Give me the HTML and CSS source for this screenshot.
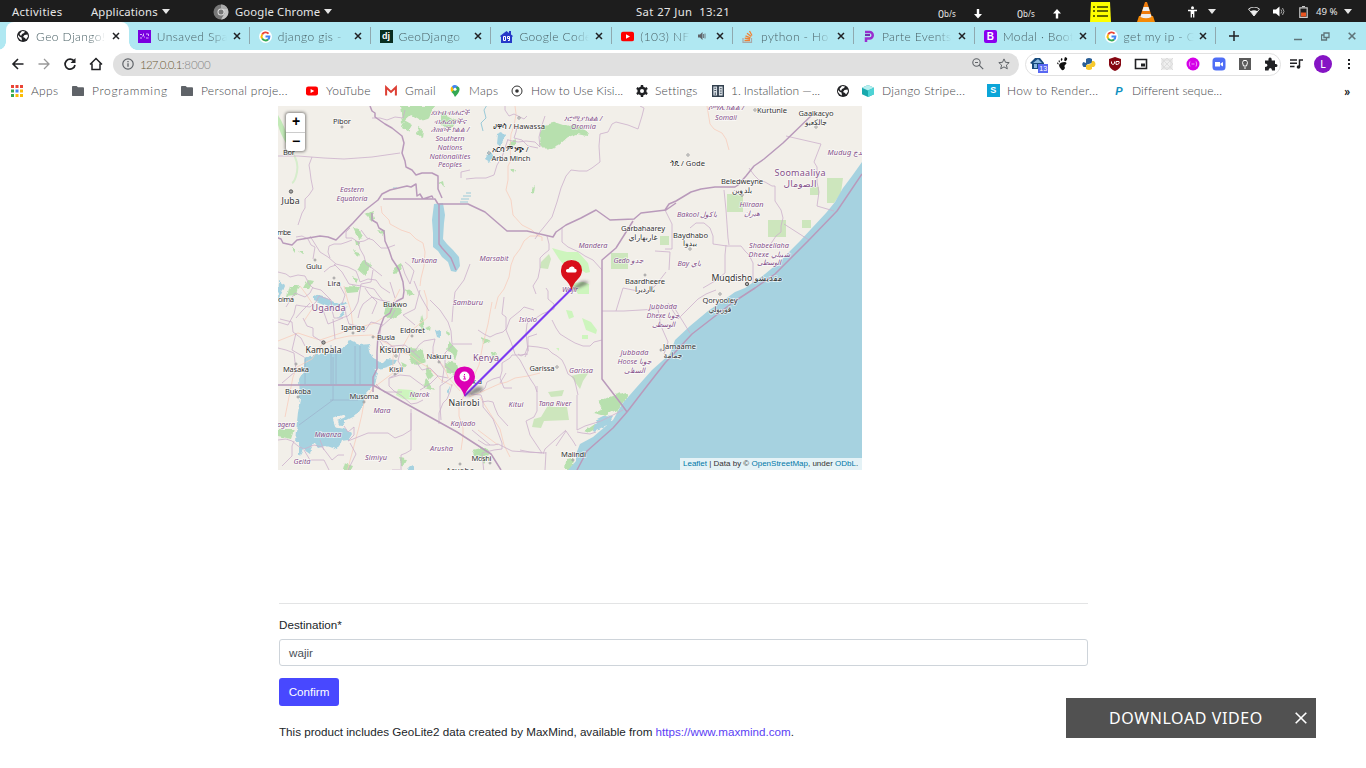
FILE: index.html
```html
<!DOCTYPE html>
<html lang="en">
<head>
<meta charset="utf-8">
<title>Geo Django</title>
<link rel="stylesheet" href="styles.css">
</head>
<body>
<svg width="0" height="0" class="defs">
  <symbol id="globe" viewBox="0 0 12 12"><circle cx="6" cy="6" r="6" fill="#202124"/><path d="M1 5l2 2 1.500.5.5 3-2-1L1 7zM5 1l3 .5L7 3 5 4 4 6 2.500 4zM7.500 5l3-.5.5 2-2 3-1-1.500-2-1z" fill="#fff"/></symbol>
  <symbol id="google" viewBox="0 0 14 14"><circle cx="7" cy="7" r="7" fill="#fff"/><g fill="none" stroke-width="2.100"><path d="M10.300 4A4.200 4.200 0 0 0 3.400 4.800" stroke="#ea4335"/><path d="M3.400 4.800a4.200 4.200 0 0 0 0 4.400" stroke="#fbbc05"/><path d="M3.400 9.200a4.200 4.200 0 0 0 6.400 1" stroke="#34a853"/><path d="M9.800 10.200A4.200 4.200 0 0 0 11.200 7H7" stroke="#4285f4"/></g></symbol>
  <symbol id="youtube" viewBox="0 0 13 10"><rect width="13" height="10" rx="2.500" fill="#f00"/><path d="M5 2.800v4.400L9 5z" fill="#fff"/></symbol>
  <symbol id="x" viewBox="0 0 8 8"><path d="M1 1l6 6M7 1L1 7" stroke="#202124" stroke-width="1.500"/></symbol>
  <symbol id="folder" viewBox="0 0 13 11"><path d="M1 0h4l1.500 1.500H12a1 1 0 0 1 1 1V10a1 1 0 0 1-1 1H1a1 1 0 0 1-1-1V1a1 1 0 0 1 1-1z" fill="#5f6368"/></symbol>
  <symbol id="caret" viewBox="0 0 8 5"><path d="M0 0h8L4 5z" fill="#e6e6e6"/></symbol>
</svg>

<header class="topbar">
  <span class="activities">Activities</span>
  <span class="apps">Applications <svg width="8" height="5"><use href="#caret"/></svg></span>
  <span class="current"><svg width="16" height="16" viewBox="0 0 16 16"><circle cx="8" cy="8" r="7.500" fill="#777"/><path d="M8 .5a7.500 7.500 0 0 1 6.500 4H8z" fill="#aaa"/><path d="M8 15.500a7.500 7.500 0 0 0 6.500-11H9l2.500 5z" fill="#c4c4c4"/><circle cx="8" cy="8" r="3.500" fill="#ddd"/><circle cx="8" cy="8" r="2.500" fill="#777"/></svg>Google Chrome <svg width="8" height="5"><use href="#caret"/></svg></span>
  <time class="clock">Sat 27 Jun&nbsp; 13:21</time>
  <span class="net">0<small>b/s</small></span>
  <svg class="arrow" width="8" height="10" viewBox="0 0 8 10"><path d="M2.800 0h2.400v5H8L4 9.500 0 5h2.800z" fill="#fff"/></svg>
  <span class="net">0<small>b/s</small></span>
  <svg class="arrow" width="8" height="10" viewBox="0 0 8 10"><path d="M2.800 9.500h2.400v-5H8L4 0 0 4.500h2.800z" fill="#fff"/></svg>
  <svg width="21" height="20" viewBox="0 0 21 20"><path d="M1 0h19l1 20H0z" fill="#ff0"/><path d="M3 5h2M7 5h11M3 9h2M7 9h11M3 14h2M7 14h11" stroke="#333a00" stroke-width="1.400"/></svg>
  <svg width="18" height="20" viewBox="0 0 18 20"><path d="M2 14h14l2 6H0z" fill="#f58a07"/><path d="M8 0h2l5 15q-6 3-12 0z" fill="#ef7c0d"/><path d="M6.500 5h5l1.200 4H5.300zM4.400 12h9.200l1 3q-5.600 2.500-11.200 0z" fill="#eee"/></svg>
  <svg width="11" height="12" viewBox="0 0 11 12"><circle cx="5.500" cy="1.800" r="1.500" fill="#fff"/><path d="M1 4.500h9M5.500 4v4M4.300 4v7.500M6.700 4v7.500" stroke="#fff" stroke-width="1.300"/></svg>
  <svg width="8" height="5"><use href="#caret"/></svg>
  <svg width="12" height="10" viewBox="0 0 12 10"><path d="M.5 2Q6-2 11.500 2L6 9z" fill="none" stroke="#ddd"/><path d="M2.500 4.300Q6 2 9.500 4.300L6 9z" fill="#eee"/></svg>
  <svg width="13" height="11" viewBox="0 0 13 11"><path d="M0 3.500h3L6.500.5v10L3 7.500H0z" fill="#fff"/><path d="M8 3.500q1.500 2 0 4M9.500 2q3 3.500 0 7" fill="none" stroke="#aaa"/></svg>
  <svg width="9" height="12" viewBox="0 0 9 12"><path d="M3 .5h3M.8 1.800h7.400v9.500H.8z" fill="none" stroke="#ccc" stroke-width="1.200"/><path d="M2 6.500h5v4H2z" fill="#e95420"/></svg>
  <span class="battery">49 %</span>
  <svg width="8" height="5"><use href="#caret"/></svg>
</header>

<nav class="tabs">
  <div class="tab active"><svg class="fav" width="12" height="12"><use href="#globe"/></svg><span>Geo Django!</span><svg class="close" width="8" height="8"><use href="#x"/></svg></div>
  <div class="tab"><svg class="fav" viewBox="0 0 13 13"><rect width="13" height="13" fill="#7a00df"/><path d="M2 4.500h2M5.500 3.500v2.500H4M8 4h2.500v2M3 7v2M6 7h1M8 8h2.500" stroke="#d7b4ff" fill="none"/></svg><span>Unsaved Spa</span><svg class="close" width="8" height="8"><use href="#x"/></svg></div>
  <div class="tab"><svg class="fav"><use href="#google"/></svg><span>django gis -</span><svg class="close" width="8" height="8"><use href="#x"/></svg></div>
  <div class="tab"><span class="fav dj">dj</span><span>GeoDjango</span><svg class="close" width="8" height="8"><use href="#x"/></svg></div>
  <div class="tab"><svg class="fav" viewBox="0 0 13 13"><path d="M0 6l6.500-5L9 3V1h2v3.500L13 6l-1 1v6H1V7z" fill="#2639c8"/><path d="M3.500 10.500v-4h2v4zM7.500 6.500h2v2h-2zM9.500 8v2.500H8" fill="none" stroke="#fff"/></svg><span>Google Code</span><svg class="close" width="8" height="8"><use href="#x"/></svg></div>
  <div class="tab sound"><svg class="fav"><use href="#youtube" y="1.500" height="10"/></svg><span>(103) NF</span><svg class="speaker" width="8" height="8" viewBox="0 0 8 8"><path d="M0 2.500h2L4.500 0v8L2 5.500H0z" fill="#5f6368"/><path d="M5.500 2v4M7 1.500v5" stroke="#5f6368" stroke-width=".8"/></svg><svg class="close" width="8" height="8"><use href="#x"/></svg></div>
  <div class="tab"><svg class="fav" viewBox="0 0 13 13"><path d="M1 8v4.300h8.500V8" fill="none" stroke="#a9a9a9" stroke-width="1.200"/><path d="M2.500 10.500H8M2.700 8.200l5.400.8M3.500 5.800l5 2M5 3.300l4.300 3.300M7.500 1L10 5.500" stroke="#ef8236" stroke-width="1.300"/></svg><span>python - Ho</span><svg class="close" width="8" height="8"><use href="#x"/></svg></div>
  <div class="tab"><svg class="fav" viewBox="0 0 13 13"><path d="M3 12V8.500h3.500a3 3 0 0 0 0-6.500H2" fill="none" stroke="#9a2fd0" stroke-width="2.500"/><path d="M2 5h5" stroke="#6b1fa8" stroke-width="1.800"/></svg><span>Parte Events</span><svg class="close" width="8" height="8"><use href="#x"/></svg></div>
  <div class="tab"><span class="fav boot">B</span><span>Modal · Boot</span><svg class="close" width="8" height="8"><use href="#x"/></svg></div>
  <div class="tab"><svg class="fav"><use href="#google"/></svg><span>get my ip - G</span><svg class="close" width="8" height="8"><use href="#x"/></svg></div>
  <svg class="newtab" width="10" height="10" viewBox="0 0 10 10"><path d="M5 0v10M0 5h10" stroke="#202124" stroke-width="1.500"/></svg>
  <div class="window">
    <svg width="9" height="9" viewBox="0 0 9 9"><path d="M0 7.500h8" stroke="#5f7479" stroke-width="1.500"/></svg>
    <svg width="9" height="9" viewBox="0 0 9 9"><path d="M3 1h5v4.500H3zM5.500 5.500V8h-5V3H3" fill="none" stroke="#5f7479" stroke-width="1.300"/></svg>
    <svg width="8" height="8" viewBox="0 0 8 8"><path d="M.7.7l6.600 6.600M7.300.7L.7 7.300" stroke="#5f7479" stroke-width="1.600"/></svg>
  </div>
</nav>

<div class="toolbar">
  <div class="nav">
    <svg viewBox="0 0 14 14"><path d="M12.500 7H2M7 2L2 7l5 5" fill="none" stroke="#202124" stroke-width="1.600"/></svg>
    <svg viewBox="0 0 14 14"><path d="M1.500 7H12M7 2l5 5-5 5" fill="none" stroke="#999" stroke-width="1.300"/></svg>
    <svg viewBox="0 0 14 14"><path d="M11.300 4.500A5 5 0 1 0 12 8" fill="none" stroke="#202124" stroke-width="1.700"/><path d="M12.500 1v5h-5z" fill="#202124"/></svg>
    <svg viewBox="0 0 14 14"><path d="M1 7.500l6-6 6 6M3 6.500v6h8v-6" fill="none" stroke="#202124" stroke-width="1.500"/></svg>
  </div>
  <div class="omnibox">
    <svg width="12" height="12" viewBox="0 0 12 12"><circle cx="6" cy="6" r="5.200" fill="none" stroke="#5f6368" stroke-width="1.200"/><path d="M6 5.300v3.500M6 3v1.300" stroke="#5f6368" stroke-width="1.300"/></svg>
    <span class="url">127.0.0.1<i>:8000</i></span>
    <svg width="12" height="12" viewBox="0 0 12 12"><circle cx="4.500" cy="4.500" r="3.700" fill="none" stroke="#5f6368" stroke-width="1.100"/><path d="M7.200 7.200l4 4M3 4.500h3" stroke="#5f6368" stroke-width="1.200"/></svg>
    <svg class="star" width="12" height="12" viewBox="0 0 12 12"><path d="M6 .9l1.500 3.400 3.700.3-2.800 2.500.9 3.700L6 8.900l-3.300 1.900.9-3.700L.8 4.600l3.700-.3z" fill="none" stroke="#5f6368"/></svg>
  </div>
  <div class="extensions">
    <div class="ext house"><svg viewBox="0 0 14 14"><path d="M0 6l5-5h5l4 5v6H2V7z" fill="#174a7c"/><path d="M3 6l5-4 4 4M4 7h3v4H4zM9 7h3v2" fill="#8bb8dd"/></svg><b>13</b></div>
    <svg viewBox="0 0 14 14"><path d="M9 0q4 1 1 4Q7 5 9 0M5.500 1q2 1 0 3-1.500-1 0-3M3 3q1.500 1 .5 2.500Q2 5 3 3M1 5.500q2 0 1.500 2Q1 7.500 1 5.500M3 8q1-3 6-3 3 1 0 3-1 1 0 3-2 4-4 1-2-2-2-4" fill="#111"/></svg>
    <svg viewBox="0 0 14 14"><path d="M4 6V2q3-2 6 0v4L5 7.500 4 10H1.500Q-1 7 1.500 5z" fill="#2a5f96"/><path d="M10 4h2q3 3 0 6h-2v2q-3 2-6 0V8l5-1z" fill="#f7c92e"/></svg>
    <svg viewBox="0 0 14 14"><path d="M7 0l6 2v6q-1 4-6 6-5-2-6-6V2z" fill="#850712"/><path d="M3.500 4.500v2q1.500 2 3 0v-2M8 4.500v3q4 0 3-3z" fill="none" stroke="#fff"/></svg>
    <svg viewBox="0 0 14 14"><path d="M1.500 2.500h11v9h-11z" fill="none" stroke="#202124" stroke-width="1.600"/><path d="M7 6.500h4v3H7z" fill="#202124"/></svg>
    <svg viewBox="0 0 14 14"><path d="M1 1h12v12H1z" fill="#efefef"/><path d="M3 3h8v8H3zM1 7l6-6 6 6-6 6zM1 1l12 12M13 1L1 13" fill="none" stroke="#ddd"/></svg>
    <svg viewBox="0 0 14 14"><circle cx="7" cy="7" r="6.500" fill="#d500e8"/><path d="M4 4.500Q2.500 7 4 9.500M10 4.500q1.500 2.500 0 5M5.500 7h3" fill="none" stroke="#fff" stroke-width=".6"/></svg>
    <svg viewBox="0 0 14 14"><rect x=".5" y=".5" width="13" height="13" rx="3.500" fill="#4f6ef6"/><path d="M3 5h5v4.500H3zM8.500 6.500L11 5v4.500L8.500 8z" fill="#fff"/></svg>
    <svg viewBox="0 0 14 14"><path d="M1 1h12v12H1z" fill="#5a5a5a"/><path d="M5.500 9q-2-4 0-5.500h3Q10.500 5 8.500 9zM6 11h2" fill="none" stroke="#fff"/></svg>
    <svg viewBox="0 0 14 14"><path d="M1 3.500h3.500Q4 .5 6 .5t1.700 3H11V7q2.500-.5 2.500 1.500T11 10v3.500H8Q8 11 6.300 11T4.500 13.500H1V10q2.500 0 2.500-1.700T1 6.500z" fill="#202124"/></svg>
  </div>
  <svg class="queue" width="14" height="12" viewBox="0 0 14 12"><path d="M1 2h7M1 5.200h7M1 8.500h4.500M10.500 9V2H14" stroke="#202124" stroke-width="1.500" fill="none"/><circle cx="9.500" cy="9" r="1.800" fill="#202124"/></svg>
  <span class="avatar">L</span>
  <svg class="dots" width="4" height="12" viewBox="0 0 4 12"><path d="M1 1h2v2H1zM1 5h2v2H1zM1 9h2v2H1z" fill="#202124"/></svg>
</div>

<nav class="bookmarks">
  <a><svg viewBox="0 0 12 12"><path d="M0 0h3v3H0zM4.500 0h3v3h-3zM9 0h3v3H9z" fill="#ea4335"/><path d="M0 4.500h3v3H0zM0 9h3v3H0z" fill="#34a853"/><path d="M4.500 4.500h3v3h-3z" fill="#4285f4"/><path d="M9 4.500h3v3H9zM4.500 9h3v3h-3zM9 9h3v3H9z" fill="#fbbc05"/></svg>Apps</a>
  <a class="wide"><svg><use href="#folder"/></svg>Programming</a>
  <a><svg><use href="#folder"/></svg>Personal proje...</a>
  <a><svg><use href="#youtube"/></svg>YouTube</a>
  <a><svg viewBox="0 0 13 11"><path d="M1.200 10.500V1.500l5.300 5 5.300-5v9" fill="none" stroke="#dd3f34" stroke-width="2.200"/></svg>Gmail</a>
  <a><svg viewBox="0 0 12 12"><path d="M6 12Q5 9 2.500 7L8 1q3 1 2.500 4T6 12z" fill="#34a853"/><path d="M2.500 7Q.5 3.500 3 1.200L6 4z" fill="#fbbc05"/><path d="M3 1.200Q5.500-1 8.500 1L5 5z" fill="#4285f4"/><circle cx="6" cy="4.200" r="1.500" fill="#fff"/></svg>Maps</a>
  <a class="close-set"><svg viewBox="0 0 12 12"><circle cx="6" cy="6" r="5" fill="none" stroke="#333"/><circle cx="6" cy="6" r="1.800" fill="#333"/></svg>How to Use Kisi...</a>
  <a class="tight"><svg viewBox="0 0 12 12"><circle cx="6" cy="6" r="3.300" fill="none" stroke="#202124" stroke-width="2.600"/><path d="M6 0v2.500M6 9.500V12M.8 3l2 1.200M9.200 7.800l2 1.200M.8 9l2-1.200M9.200 4.200l2-1.200" stroke="#202124" stroke-width="2.400"/></svg>Settings</a>
  <a class="install"><svg viewBox="0 0 13 13"><path d="M0 0h13v13H0z" fill="#33414f"/><path d="M1.500 1.500h4v10h-4zM7.500 1.500h4v10h-4z" fill="#dce2e8"/><path d="M2.500 3.500h2M2.500 6h2M3.500 8v3M8.500 4h2M8.500 6.500h2M8.500 9h2" stroke="#33414f"/></svg>1. Installation —...</a>
  <a><svg><use href="#globe"/></svg></a>
  <a><svg viewBox="0 0 13 13"><path d="M6.500 0L13 3v7l-6.500 3L0 10V3z" fill="#18a9ad"/><path d="M0 3l6.500-3L13 3 6.500 6z" fill="#b8eff0"/><path d="M6.500 6L13 3v7l-6.500 3z" fill="#4ed3d5"/></svg>Django Stripe...</a>
  <a><span class="bm-s">S</span>How to Render...</a>
  <a class="last"><span class="bm-p">P</span>Different seque...</a>
  <b>»</b>
</nav>

<main class="page">
  <section class="map">
    <svg class="tiles" width="584" height="364" viewBox="278 106 584 364">
      <defs>
        <filter id="rough" x="-5%" y="-5%" width="110%" height="110%"><feTurbulence type="fractalNoise" baseFrequency=".14" numOctaves="2" seed="4"/><feDisplacementMap in="SourceGraphic" scale="5" xChannelSelector="R" yChannelSelector="G"/></filter>
        <filter id="soft"><feGaussianBlur stdDeviation="1.500"/></filter>
      </defs>
      <rect x="278" y="106" width="584" height="364" fill="#f2efe9"/>

      <g class="green" filter="url(#rough)">
        <path d="M400 106h35l-5 11-10 3-9-5-9 8-1-10zM404 120l9 5-4 7-7-5zM418 127l5 3-1 7-5-4zM441 112l15 8-6 10-9-6z"/>
        <path d="M541 126l16-4 12 4 5-3 14 9-1 4-10-2-9 3-9 8-12 5-8-8zM510 141l7-2-1 6-6 1zM531 189l4-4-1 8-3 1zM511 168l4 1-2 4z"/>
        <path d="M364 214l9-3 2 8-3 3zM354 228l6 1 3 9-4 1zM355 240l5 1v5h-4zM378 230l6 1-1 4zM363 259l8 5-6 12-8-7zM353 250l6 2-1 5zM393 268l8-5 2 7-9 3zM438 183l5-2 1 5zM308 279l5 1-5 8h-5zM292 248h3v4zM298 251h5v4zM351 277l7 2-2 5zM334 261l5 3z"/>
        <path d="M289 286h10l-4 10-9 1zM346 286l14 1-2 5-10 1zM386 303l12 2 4 8-11 7-7-6zM406 289l9 6-7 2zM422 314l3 14-4 2zM425 328l6-2-1 6zM410 348l11 1 4 13-9 4-7-7zM428 364l5 11-5 5-3-8zM420 319l5 8-6-2zM370 371l7 1-2 3zM401 362l6 3-3 4zM278 430h16l-3 9-13-3z"/>
        <path d="M449 341l9 10-3 9-8-12zM446 362l10 2 3 12-11-3zM426 379l9 11-11-3zM399 458l8 1-4 8zM473 450l12-3 5 6-8 4-7-1zM480 459l8-1-4 6zM344 463l9 3-2 4h-9zM306 440l5 1-6 6zM566 460l7-1-2 11h-6zM447 330l4 2-3 4zM482 337l8 4-7 3zM490 352l6 1-2 7z"/>
        <path d="M598 402l11-5 16-5 3 4-10 13-13 7-12-3 9-4zM584 431l10-7 4 4-9 5z"/>
      </g>
      <g class="pale">
        <path d="M611 253h17v16h-17zM660 236h9v9h-9z"/>
        <path d="M727 194h16v18h-16zM768 220h18v17h-18zM802 220h9v8h-9zM810 187h9v8h-9z"/>
        <path d="M827 178h16l-2 15-7 10h-7zM541 262l8-8 2 5-3 10-8-1zM571 376l8-2 10-2-6 9-3 8-5-7zM547 407l2-4 4 4h14l2 13-25 1-3 7-9-1 2-8 7-2zM548 392l16-2-2 6-11 1z"/>
      </g>
      <g fill="#cdf5bd">
        <path d="M552 248l7 2 8 2 11 0 10 11 2 9-4 1-8-5-6-9-9 5-4-5zM571 283l12-1 6 2v10l-11 0zM566 310l6 1 2 6-5 2zM582 318l9 4 6 8-1 4-10-4z"/>
        <path d="M398 389l13 1 8 3-3 7-13-1-7-4zM582 335h6v4h-6zM556 348h3v3z"/>
      </g>
      <path d="M278 115q7 11 10 25l-2 3q-6-10-8-18z" fill="#c3eab8"/>
      <path d="M292 152q7 10 5 20t-5 11" fill="none" stroke="#d6edcc" stroke-width="2"/>

      <g class="water">
        <path d="M862 162l-10 14-9 12-8 14-9 11-14 15-12 13-11 11-12 12-12 10-20 14-10 4-14 10-13 9-18 15-15 14-5 14-18 16-16 18-14 16-9 16-20 17-13 7-4 10v7l-8 9-4 8h302z"/>
        <path d="M434 204l9-1 2 12-1 8-1 16 4 5 6 6 6 7 1 9-4 6-5-1-3-9-6-5-4-6-5-4v-14l-1-13z"/>
        <g filter="url(#rough)">
          <path d="M349 340l3 2 8 3 9-1 1 6 3 9 7 3-7 5 5 7-3 9-10 11-3 12-7 10-10 5-1 8 8 5-3 5-7 1-4 10-12-4-8 2-4-5-5 10-6-4-4 7v-14h-4l3-30 2-14-1-19 4-7 2-14 9-3 14-1 15-6z"/>
          <path d="M371 363l12-1 3-3 10 1-3 5-10 3-8 1z"/>
          <path d="M314 295l12 3 8 4 13 1-5 2-13 1 6 5-9-6-12-5zM325 305l-5 6zM347 307l-4 9-6 2"/>
          <path d="M497 134l5-2 3 3-4 12-5-3zM489 151l5 4-4 8-5-3zM279 281l6 4-7 17zM435 330l5-1v9l-3-1zM446 392l4-5-2 9zM595 421l10-5 8 1-4 7-14 7-2-4zM411 466l4-1v5h-8z"/>
        </g>
        <g stroke="#9bcad8" stroke-width="1"><path d="M466 193h5M463 196h8M461 199h8M460 202h8M393 188h4M487 105l-3 5 2 8-5 5 2 8" fill="none"/></g>
      </g>
      <path d="M345 416l-10 4 2 6 20 3M344 425l15-3" fill="none" stroke="#f2efe9" stroke-width="3.500" filter="url(#rough)"/>

      <g class="road">
        <path d="M381 206l1 7 7 7 1 4 11 6 9 3 6 6 7 4 2 9-1 14-3 12-1 8M515 106l1 8-2 12-3 8-1 14 1 12-3 6 0 14-2 10 5 10 2 15 9 10 10 5 5 5 5 2v4M540 236h-10l-6 5-4 8-6 8-3 8-2 12-5 12-6 8-3 12M707 106l3 18 4 5 8 4 4 6 3 11"/>
        <path d="M492 302l-4 22-2 8-3 12-4 21-7 15-2 14M540 373l-12 3-13 2-8 4-8 2-20 9-10 4M464 396l-5 10v10l4 12v8l-2 14M278 341l20-8 12 4 10 3 30-10 25-7 15-10 4-12 6-12M322 344l-10 15-15 8-4 10-3 15-5 25M323 344l12-5 14-3 23-1 12 7 11 5-2 10v16l-20 15-9 14-2 12-3 13-12 45M300 286l6 8 8 12-10 15M480 397l6 10 14 22 4 16 6 12M478 430l20 15M394 352l15 2 10 8 10 6 12 12 12 6M424 290l3 10v18l-15 12-10 18M344 286l3 12 4 13 2 15M432 352l12 15 4 10 12 14"/>
      </g>
      <g class="region">
        <path d="M278 156h20l26 2 20 1 28-2 14-2 14-2M312 157l-3 8 1 6 1 8 2 10-4 6-4 4 0 9-3 5-4 12M372 118l8 0 7 2 8-3 8 1 2-8M310 236l5 8 5 8 8 5 8 7 12 3 8 4 2 5 2 6 8-3 8 1 5 7 9 6M330 258l-2-6 1-6 5-2 7 0 6-2 5-2M350 228l-4 4 0 6 6 0 6 4 6-1 6-3M358 241l2 8 4 7 2 8 6 4 10 8M361 230l6 8 6 2 8 8 6 0 8-3M336 265l-6 2-6 5M296 237l6-1 6 3 3 6 4 2-2 12"/>
        <path d="M278 272l8 2 4 3 8-2 7 1 4 8 4 4 8 2 10 10 1 10 2 8 7 0 7-2 6-6 4-8 3-18 10-2 2-12M334 264l8 8 7 12 12 2 13 3 5 7 5 6M313 287l-3 6-5 4-10-4-4 6-5 8M331 300l-12-4-3 6-6 5-8-1-6-1-2 9-6 11-10-3M303 318l4 8 6 2 0 8 11 7M345 307l1 8 3 9 8 2 7 6 7-10 12 3M358 318l2-8 3-6 9-7 8 3 10 2M343 318l-15 6-5-14M333 319l2 20M296 333l-4 17 12 7M278 348l8 2 8 3 2 18-14 12M365 288l4 6 8 8-5 12M390 282l5 16M310 303l-8 8-6 7M340 286l5 9-3 9M280 319l12 3 1 10 8 6 4 8"/>
        <path d="M395 310l-4 8-10 9-2 12 8 3 8 7 10 2 10 0 4-6 5-4 11-2-2 8v8l6 6 5 8-2 14M378 338l7 11 8-3 12-1 8 7 7 6M415 325l-12-10 12-6 5-19M402 265l3 9 5 10 4-13-4-5-5-4M414 281l4 10 4 8 7 12M430 300l10 10 8 12 3 9 1 13h20M452 322l1-14 2-16 9-12 6-16M453 345l-8 8 0 13 11 8-6 5-10 7v20l1 14M400 352l-2 9 5 8-6 5-8 4 0 8 5 5 8 5 9 8 6-1 6-3M390 378l10-3 10 1 8 6 7 5M376 384l8 8 18 0M416 362l6 8 8-2 8 8 10 2M420 390l10-6 8-8"/>
        <path d="M278 440l8-1 6 2 6 5 6 3 10-4 8 2 4 5 6 8 6-5 6 0M344 426l4 6 6-5 0 8-6 6 10-4 10-4 20 0 7 5 8-3 8-5 0-17M411 409v41l-5 3-5 2v15M294 441l-2 5v10l-10 10M350 443l6 11-8 16M452 384l-2 8-3 7-4 4-4 10v11M304 450l6 10 14 0 5 10M320 440l4 10M400 470h-8"/>
        <path d="M466 179l10-1 10 0 8-3 3-10 5-8 6-18M505 104v6l4 6 5-2 10 5 3-3M508 140l10 2 8-1 9 1 5 5-1-10 3-12 3-9M517 126l-1 6-2 6 8 2 6 6 10 2M640 106l4 2-2 8-4 13-10-4-12-3-4 2-4 8-8 2-1 12 1 16-8 6-5 3-8 0-8-1-5 6-5 12-4 14-5 15-8 10-5 6-4 6M562 242v-14M562 242l6 5 11 5 6 4 8 4 9 10M547 236l2 8 0 6-5 4-4 4 0 10-2 10-5 8 3 8M461 178v-6l9-2"/>
        <path d="M786 136l35 8-7 18 3 5v15l2 10-2 14 17 5M749 168l5 7 5 5 6 2 7 4 3 0v15l6 9 2 8-2 8v6l-5 4-6 9M724 190l2 20 2 28 1 7M665 210l7 14v25h-7M690 228l6-5h8l6 5 3 8 0 8 14 2h14l4 5 4 4 4 8v20M726 245l-1 10 0 18-10 8-12 7M784 224l25 16M655 251l15 1-1 18M616 311l7-23 20 4 6-1 7-6 10-13M602 311h22l34-2 3 17 7 16-4 12M668 303l10 16 10-10 10-10 8-5 10-4M672 304l18 29"/>
        <path d="M546 288l2 3 0 8 6 5v5l-12 5-6 4-7 3-2 3-1 9 2 18M534 310l-10-3-4 4-10 8-4 11M552 320l4 8 4 6 8 5 7 4 8 3 7 0 4-4 8-2M578 395l-2-9-2-8-6-4-3-8-3-6-5-4-5-3-4-4-10-2-10-1-3 8-4 2-3-2M577 395v35l8-4 16-5 22-11M577 432l5 1 8 1 6-2M556 446l10-15 7 10 3 5M543 454l2-5 21-19M537 386v25l-3 6-8 4 4 14 12 18-12-1-10-2M528 354l-8 1-8 0-2 3-8 5 0 8-2 7 4 10 8 0M506 330l5 12 4 12 5 6 8 15 3 5 4 6 2 6M500 377l-7 2-6 3-2 6-5 4M482 402l6-1 5 1 2 6 3 7 10 11M471 394l10 1 2 6v6l10 12 3 8 6 16v6l-8 1-12 3 2 20M546 452l-1 18M478 440l8 5h8l4-1 14 7 14 1 20 1M478 330l6 4 6 3 6-3 7-2 3-3 0-12-4-3 2-17M472 430l18 15M506 373l-6 10M525 357l3-6v-14l9-3"/>
      </g>
      <g class="border">
        <path d="M370 106l2 5 3 2 0 4 10 7 7 4 10 8 2 7-2 10 3 8 1 6 6 3 4 5 6-2h10l6 3v13l4 9M433 198l-1-2-6 2-3 1-3-5-3 2-1-12-5 3-4 -1-17 4-8 4-4 6-14 11-11 12-17 17-8-3-8-1-23 4-5 5-9-2-2-4-8-3-9 5h-5M383 199l52 0 3 5M438 204h30l17 8 22 19h20l26 6 3-5 10-7 15-7 15-8 14 10 24-1 7-6 25-3 10-7M665 210l4-6 7-3 15-9 10-3 14-2h20l3-2 8-9 8-10 10-7 19-16 30-29M439 204v40l3 4 9 10 5 12M372 213l0 7 5 3 2 5 5 3 1 10 4 9 3 9 4 6 3 5 4 12 1 9-1 7-6 3-4 4-3 8-6 4-3 8-3 10-1 17 0 17-4 8v15M633 221l-17 27-14 12v119l20 26 5 7"/>
        <path d="M278 385h95l30 17 54 30 34 22 10 16"/>
        <path d="M862 174l-25 37-29 30-33 33-20 14-23 15-40 31-27 29-18 23-20 26-14 16-26 23-10 19" />
      </g>
      <path d="M331 345v40M336 350v35M355 346v39M360 346v39M305 357v28M333 357v43l-34 25M330 400h28" fill="none" stroke="#9db5ce" stroke-width=".8"/>

      <g class="dots-map"><circle cx="342" cy="127" r="1"/><circle cx="315" cy="260" r="1"/><circle cx="334" cy="278" r="1"/><circle cx="519" cy="118" r="1.200"/><circle cx="489" cy="153" r="1.200"/><circle cx="688" cy="155" r="1.200"/><circle cx="755" cy="110" r="1.200"/><circle cx="816" cy="127" r="1.200"/><circle cx="742" cy="195" r="1.200"/><circle cx="690" cy="249" r="1.200"/><circle cx="720" cy="294" r="1.200"/><circle cx="557" cy="367" r="1.200"/><circle cx="353" cy="333" r="1"/><circle cx="373" cy="337" r="1"/><circle cx="412" cy="336" r="1"/><circle cx="396" cy="356" r="1.200"/><circle cx="296" cy="364" r="1"/><circle cx="395" cy="374" r="1"/><circle cx="298" cy="397" r="1"/><circle cx="364" cy="402" r="1"/><circle cx="439" cy="362" r="1"/><circle cx="490" cy="463" r="1"/><circle cx="460" cy="464" r="1"/><circle cx="661" cy="350" r="1"/><circle cx="645" cy="275" r="1"/><circle cx="573" cy="460" r="1"/></g>
      <g class="capitals"><circle cx="291" cy="191.500" r="1.700"/><circle cx="323.500" cy="342.500" r="1.700"/><circle cx="747" cy="284" r="1.700"/></g>

      <g class="town">
        <text x="342" y="124" textLength="18">Pibor</text><text x="289" y="155" textLength="12">Bor</text><text x="284" y="235" textLength="14">mbe</text><text x="314" y="269" textLength="16">Gulu</text><text x="334" y="286" textLength="13">Lira</text>
        <text x="519" y="128.500" textLength="52">ሀዋሳ / Hawassa</text><text x="510" y="152" textLength="37">አርባ ምንጭ /</text><text x="511" y="160.500" textLength="39">Arba Minch</text>
        <text x="643" y="230.500" textLength="44">Garbahaarey</text><text x="643" y="240" textLength="29">غاربهاراي</text><text x="645" y="283.500" textLength="40">Baardheere</text><text x="645" y="292" textLength="20">بااردیرا</text>
        <text x="772" y="113" textLength="30">Kurtunle</text><text x="816" y="116" textLength="35">Gaalkacyo</text><text x="816" y="125" textLength="22">جالكعيو</text><text x="687.500" y="165.500" textLength="35">ጎዴ / Gode</text>
        <text x="742" y="183.500" textLength="42">Beledweyne</text><text x="742" y="193" textLength="20">بلد وين</text><text x="690.500" y="237.500" textLength="35">Baydhabo</text><text x="690" y="246" textLength="14">بيدوا</text>
        <text x="720" y="303" textLength="35">Qoryooley</text><text x="720" y="312" textLength="23">قوريولي</text><text x="679.500" y="349" textLength="33">Jamaame</text><text x="673" y="358" textLength="19">جمامة</text>
        <text x="286" y="302" textLength="16">oima</text><text x="395" y="307" textLength="24">Bukwo</text><text x="353" y="329.500" textLength="24">Iganga</text><text x="412.500" y="332.500" textLength="25">Eldoret</text><text x="386" y="340" textLength="18">Busia</text><text x="439" y="359" textLength="25">Nakuru</text><text x="296" y="372" textLength="26">Masaka</text><text x="396" y="371.500" textLength="14">Kisii</text><text x="298" y="394" textLength="26">Bukoba</text><text x="364" y="399" textLength="29">Musoma</text><text x="542" y="370.500" textLength="25">Garissa</text><text x="573.500" y="456.500" textLength="25">Malindi</text><text x="481.500" y="461" textLength="20">Moshi</text><text x="460" y="473" textLength="28">Arusha</text><text x="477" y="384" textLength="10">ka</text>
      </g>
      <g class="town city">
        <text x="290.500" y="204" textLength="18">Juba</text><text x="747" y="281" textLength="71">Muqdisho مقديشو</text><text x="395" y="352.500" textLength="31">Kisumu</text><text x="323.500" y="353" textLength="36">Kampala</text><text x="464" y="406" textLength="31">Nairobi</text>
      </g>
      <g class="country">
        <text x="800" y="176" textLength="51">Soomaaliya</text><text x="800" y="187" textLength="33">الصومال</text><text x="328.500" y="310.500" textLength="34">Uganda</text><text x="486" y="361" textLength="26">Kenya</text>
      </g>
      <g class="state">
        <text x="450" y="115" textLength="38">ደቡብ ብሔሮች</text><text x="450" y="123.500" textLength="32">ብሔረሰቦችና</text><text x="450" y="132" textLength="39">ሕዝቦች ክልል /</text><text x="450" y="141" textLength="29">Southern</text><text x="450" y="150" textLength="25">Nations</text><text x="450" y="158.500" textLength="41">Nationalities</text><text x="450" y="167" textLength="24">Peoples</text>
        <text x="352" y="192" textLength="24">Eastern</text><text x="352" y="201" textLength="31">Equatoria</text><text x="424" y="263" textLength="26">Turkana</text><text x="583" y="120.500" textLength="39">ኦሮሚያ ክልል /</text><text x="583.500" y="129" textLength="25">Oromia</text><text x="494" y="260.500" textLength="29">Marsabit</text><text x="593" y="248" textLength="29">Mandera</text><text x="628.500" y="263" textLength="30">Gedo جدو</text>
        <text x="726" y="110" textLength="37">ሶማሌ ክልል /</text><text x="726" y="119.500" textLength="22">Somali</text><text x="847" y="155" textLength="39">Mudug مدج</text><text x="751.500" y="207" textLength="24">Hiiraan</text><text x="751.500" y="215.500" textLength="16">هيران</text><text x="697" y="217" textLength="40">Bakool باكول</text><text x="689" y="265.500" textLength="23">Bay باي</text><text x="769" y="248" textLength="40">Shabeellaha</text><text x="769" y="257" textLength="41">Dhexe شبيلي</text><text x="769" y="265" textLength="24">الوسطى</text>
        <text x="663" y="309" textLength="28">Jubbada</text><text x="663" y="318" textLength="33">Dhexe جوبا</text><text x="663" y="327" textLength="23">الوسطى</text><text x="634.500" y="355" textLength="28">Jubbada</text><text x="634.500" y="364" textLength="34">Hoose جوبا</text><text x="634.500" y="373" textLength="21">السفلى</text>
        <text x="468" y="304.500" textLength="30">Samburu</text><text x="528" y="322" textLength="18">Isiolo</text><text x="570" y="292" textLength="16">Wajir</text><text x="581" y="372.500" textLength="24">Garissa</text><text x="516" y="407" textLength="15">Kitui</text><text x="555" y="406" textLength="33">Tana River</text><text x="419.500" y="397" textLength="20">Narok</text><text x="382" y="413" textLength="17">Mara</text><text x="286" y="427" textLength="18">agera</text><text x="463" y="426" textLength="25">Kajiado</text><text x="328" y="436.500" textLength="27">Mwanza</text><text x="302" y="464" textLength="17">Geita</text><text x="376" y="459.500" textLength="22">Simiyu</text><text x="441.500" y="451" textLength="23">Arusha</text>
      </g>

      <path d="M464.500 396l107-107" stroke="#7c3bf2" stroke-width="2"/>
      <g id="pins">
        <path d="M464 396l12-9q8-1 7 2t-14 7zM571 289l11-8q7 0 6 2t-13 6z" fill="#333" opacity=".5" filter="url(#soft)"/>
        <path d="M571.500 290q-2-7-7-11-4-4-3.500-9 1-10 10.500-10t10.500 10q0 5-4 9-5 5-6.500 11z" fill="#d80f1a"/>
        <path d="M567.500 272.500q-2-.5-1.500-2.500 1-1.500 2.500-1 1-3 4-2.500 2 .5 2.200 2.300 2.300 0 2 2.200-.5 1.500-1.700 1.500z" fill="#fff"/>
        <path d="M464.500 396.500q-2-7-7-11-4-4-3.500-9 1-10 10.500-10t10.500 10q0 5-4 9-5 5-6.500 11z" fill="#dc00b5"/>
        <circle cx="464.500" cy="376.500" r="5" fill="#fff"/><path d="M464.500 374v1.200M463.500 376.300h1.200v2.500M463.200 379h2.800" stroke="#dc00b5" fill="none"/>
      </g>
    </svg>
    <div class="zoom"><span>+</span><span>−</span></div>
    <div class="attribution"><a>Leaflet</a> | Data by © <a>OpenStreetMap</a>, under <a>ODbL</a>.</div>
  </section>

  <form class="form">
    <label>Destination*</label>
    <div class="field">wajir</div>
    <button type="button">Confirm</button>
    <p>This product includes GeoLite2 data created by MaxMind, available from <a>https://www.maxmind.com</a>.</p>
  </form>
</main>

<aside class="download"><span>DOWNLOAD VIDEO</span><svg width="12" height="12" viewBox="0 0 12 12"><path d="M.7.7l10.600 10.600M11.300.7L.7 11.300" stroke="#fff" stroke-width="1.600"/></svg></aside>
</body>
</html>
```
FILE: styles.css
```css
* { box-sizing: border-box; }
body { margin: 0; width: 1366px; height: 768px; overflow: hidden; background: #fff; font-family: "Liberation Sans", Arial, sans-serif; }
svg { display: block; flex: none; }
.defs { position: absolute; }

.topbar { height: 22px; background: #1d1d1d; color: #e6e6e6; font: 11.300px/22px "Noto Sans", sans-serif; display: grid; align-items: center; white-space: nowrap;
  grid-template-columns: 79px 122px 423px 302px 36px 43px 36px 37px 47px 50px 21px 40px 25px 26px 17px 28px 8px; padding-left: 12px; }
.topbar span, .topbar time { display: flex; align-items: center; }
.topbar .activities { letter-spacing: .35px; }
.topbar .apps, .topbar .current { gap: 4px; letter-spacing: .15px; }
.topbar .current > svg:first-child { margin-right: 2px; }
.clock { letter-spacing: .4px; }
.topbar .net { font-size: 10.500px; padding-top: 4px; align-items: baseline; line-height: 18px; }
.topbar small { font-size: 8px; line-height: 10px; align-self: center; }
.topbar .arrow { margin-top: 4px; }
.topbar .battery { font-size: 9.700px; padding-top: 1px; }

.tabs { height: 28px; background: #b0e8f2; padding-left: 8px; display: grid; grid-template-columns: repeat(10, 120.850px) 67px auto; align-items: center; font: 300 12px "Lato", sans-serif; color: #4b6267; }
.tab { height: 28px; display: flex; align-items: center; padding: 0 8px 0 9px; position: relative; }
.tab > span:not(.fav) { width: 70px; margin-left: 6px; letter-spacing: .4px; white-space: nowrap; -webkit-mask-image: linear-gradient(90deg, #000 78%, transparent); mask-image: linear-gradient(90deg, #000 78%, transparent); }
.tab .fav { width: 13px; height: 13px; flex: none; }
.tab.active .fav { width: 12px; height: 12px; margin-left: -1px; margin-right: 1px; }
.tab .close { margin-left: auto; margin-right: 0; }
.tab:not(.active) { border-right: 1px solid #8fb5bd; border-image: linear-gradient(transparent 20%, #8fa9af 20% 78%, transparent 78%) 1; }
.tab.active { background: #fff; border-radius: 8px 8px 0 0; margin-left: -2px; padding-left: 12px; padding-right: 9px; }
.tab.active::before, .tab.active::after { content: ""; position: absolute; bottom: 0; width: 8px; height: 8px; }
.tab.active::before { left: -8px; background: radial-gradient(circle at 0 0, transparent 7.500px, #fff 8px); }
.tab.active::after { right: -8px; background: radial-gradient(circle at 100% 0, transparent 7.500px, #fff 8px); }
.tab.sound > span:not(.fav) { width: 50px; }
.speaker { margin-left: 8px; }
.dj { background: #092e20; color: #fff; font: bold 9px/12px "Liberation Sans", sans-serif; text-align: center; }
.boot { background: #8a00f0; color: #fff; border-radius: 2px; font: bold 10px/13px "Liberation Sans", sans-serif; text-align: center; }
.newtab { margin-left: 13px; }
.window { display: flex; gap: 18px; align-items: center; margin-left: 11px; }

.toolbar { height: 28px; display: flex; align-items: center; padding: 0 15px 0 11px; }
.nav { display: flex; gap: 12px; width: 102px; }
.nav svg { width: 14px; height: 14px; }
.omnibox { width: 907px; height: 23px; border-radius: 12px; background: #e0e0e0; display: flex; align-items: center; padding: 0 9px; }
.url { font: 300 11.500px "Lato", sans-serif; color: #6b5b34; margin: 0 auto 0 6px; letter-spacing: -.7px; }
.url i { font-style: normal; color: #858585; letter-spacing: -.1px; }
.omnibox .star { margin-left: 14px; }
.extensions { width: 256px; height: 23px; margin-left: 6px; border: 1px solid #e1e1e1; border-radius: 12px; display: flex; align-items: center; gap: 12px; padding-left: 4px; }
.extensions svg { width: 14px; height: 14px; }
.ext { position: relative; }
.ext b { position: absolute; left: 8px; top: 7px; width: 10px; height: 9px; background: #5868f2; color: #fff; font: 7px/9px "Liberation Sans", sans-serif; text-align: center; }
.queue { margin-left: 8px; }
.avatar { width: 18px; height: 18px; margin-left: 11px; border-radius: 50%; background: #8514c4; color: #fff; font: 10.500px/18px "Lato", sans-serif; text-align: center; }
.dots { margin-left: 15px; }

.bookmarks { height: 28px; padding: 0 0 3px 11px; display: grid; align-items: center; grid-template-columns: 61px 109px 125px 79px 64px 62px 125px 76px 125px 25px 125px 126px 231px auto; font: 300 12px "Lato", sans-serif; color: #46484b; letter-spacing: .3px; white-space: nowrap; }
.bookmarks a { display: flex; align-items: center; gap: 8px; }
.bookmarks svg { width: 12px; height: 12px; }
.bookmarks .wide { letter-spacing: .7px; }
.bookmarks .tight { letter-spacing: .15px; gap: 7px; }
.bookmarks .close-set { letter-spacing: .05px; }
.bookmarks .install { letter-spacing: -.05px; gap: 7px; }
.bookmarks .last { letter-spacing: .05px; gap: 7px; }
.bookmarks b { font-size: 14px; font-weight: 700; color: #202124; }
.bm-s { width: 13px; height: 13px; background: #0ba5d8; color: #fff; font: bold 9px/13px "Liberation Sans", sans-serif; text-align: center; margin-right: -1px; }
.bm-p { width: 12px; color: #1090c0; font: italic bold 11px/12px "Liberation Sans", sans-serif; text-align: center; }

.page { width: 810px; margin-left: 278px; }
.map { position: relative; width: 584px; height: 364px; overflow: hidden; }
.green { fill: #b7e0ae; }
.pale { fill: #cde6bd; }
.water { fill: #a6d2e0; }
.road { fill: none; stroke: #f8cdbd; stroke-width: .8; }
.region { fill: none; stroke: #cbb0cb; stroke-width: .8; stroke-linejoin: round; }
.border { fill: none; stroke: #b99abb; stroke-width: 1.500; stroke-linejoin: round; }
.dots-map { fill: #fff; stroke: #666; stroke-width: .6; }
.capitals { fill: #aaa; stroke: #444; stroke-width: .8; }
.tiles text { text-anchor: middle; paint-order: stroke; stroke: #fff; stroke-opacity: .65; stroke-width: 1.400px; font-family: "Noto Sans", "DejaVu Sans", sans-serif; }
.town { font-size: 7.600px; fill: #333; }
.tiles .city { font-size: 8.700px; }
.country { font-size: 9px; fill: #85508a; }
.state { font-size: 7.400px; font-style: italic; fill: #85508a; }
.zoom { position: absolute; left: 8px; top: 7px; width: 19px; height: 38px; background: #fff; border-radius: 3px; box-shadow: 0 0 3px 1px rgba(0,0,0,.45); }
.zoom span { display: block; height: 19px; font: bold 14px/17px "Liberation Sans", sans-serif; text-align: center; color: #000; padding-left: 1px; }
.zoom span + span { border-top: 1px solid #ccc; line-height: 16px; }
.attribution { position: absolute; right: 0; bottom: 0; height: 12px; width: 182px; padding-left: 3px; background: rgba(255,255,255,.7); color: #333; font-size: 8px; line-height: 11px; white-space: nowrap; }
.attribution a { color: #0078a8; }

.form { margin: 133px 0 0 1px; border-top: 1px solid #e3e4e5; padding-top: 14px; font-size: 11.650px; color: #212529; }
.form label { display: block; height: 21px; line-height: 14px; }
.field { height: 27px; border: 1px solid #ced4da; border-radius: 3px; padding-left: 9px; line-height: 26px; color: #495057; }
.form button { display: block; width: 60px; height: 28px; margin-top: 12px; border: 0; border-radius: 3px; background: #4848ff; color: #fff; font: 11.650px "Liberation Sans", sans-serif; padding: 0 0 2px; }
.form p { margin: 18px 0 0; line-height: 15px; white-space: nowrap; }
.form p a { color: #5a3ef5; }
.download { position: absolute; left: 1066px; top: 698px; width: 250px; height: 40px; background: #515151; color: #fff; display: flex; align-items: center; padding: 0 9px 0 43px; justify-content: space-between; font: 16px "Noto Sans", sans-serif; letter-spacing: .6px; white-space: nowrap; }
```
